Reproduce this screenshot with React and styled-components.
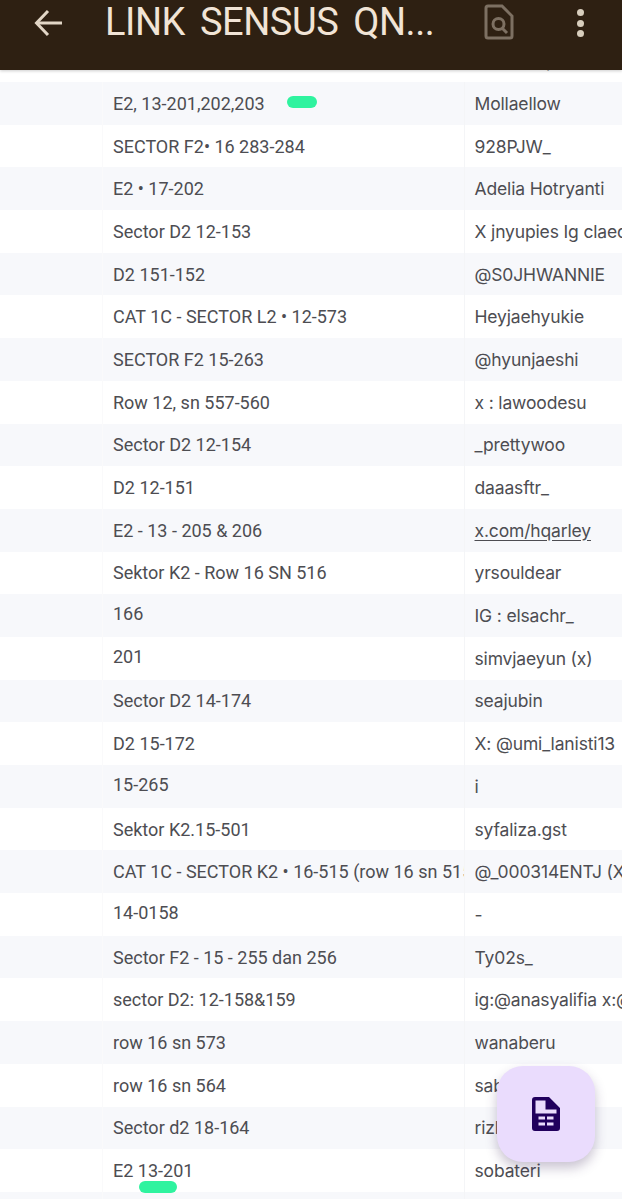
import React from 'react'
import styled, { createGlobalStyle } from 'styled-components'

const GlobalStyle = createGlobalStyle`
  html, body {
    margin: 0;
    height: 100%;
    overflow: hidden;
    background: #fff;
  }
`

const Page = styled.div`
  position: relative;
  width: 622px;
  height: 1199px;
  overflow: hidden;
  font-family: Roboto, "Liberation Sans", sans-serif;
`

const Header = styled.header`
  position: relative;
  z-index: 2;
  display: flex;
  align-items: flex-start;
  height: 70px;
  background: #2e2012;
  box-shadow: 0 1px 3px rgba(0, 0, 0, 0.2);
`

const BackButton = styled.div`
  width: 105px;
  padding: 9px 0 0 34px;
  box-sizing: border-box;
  line-height: 0;
`

const Title = styled.h1`
  width: 379px;
  margin: 0;
  font-family: Roboto, sans-serif;
  font-size: 38px;
  line-height: 44px;
  font-weight: 400;
  letter-spacing: -0.45px;
  word-spacing: 6px;
  color: #f1e4d6;
  white-space: nowrap;
`

const SearchButton = styled.div`
  width: 93px;
  padding-top: 4px;
  line-height: 0;
`

const DotsButton = styled.div`
  display: flex;
  flex-direction: column;
  gap: 3.5px;
  padding-top: 9px;
`

const Dot = styled.span`
  width: 7px;
  height: 7px;
  border-radius: 50%;
  background: #d8cebd;
`

const Peek = styled.div`
  display: grid;
  grid-template-columns: 475px 1fr;
  height: 12px;
  overflow: hidden;
  background: #fff;
`

const PeekText = styled.div`
  grid-column: 2;
  margin-top: -24px;
  font-size: 17.5px;
  line-height: 30px;
  font-family: Inter, sans-serif;
  color: #4b4b50;
  white-space: nowrap;
`

const Row = styled.div`
  display: grid;
  grid-template-columns: 103px 362px 1fr;
  height: 42.7px;
  background: ${(p) => (p.$tinted ? '#f7f8fb' : '#ffffff')};
`

const Gutter = styled.div`
  border-right: 1px solid #fafafb;
`

const Cell = styled.div`
  position: relative;
  display: flex;
  align-items: center;
  min-width: 0;
  padding: 0 3px 0 10px;
  overflow: ${(p) => (p.$open ? 'visible' : 'hidden')};
  border-right: 1px solid #f4f5f7;
  font-size: 18px;
  color: #4d4d52;
  white-space: nowrap;
`

const CellText = styled.span`
  position: relative;
  top: ${(p) => (p.$lift ? '-2px' : '0')};
`

const NameCell = styled.div`
  display: flex;
  align-items: center;
  min-width: 0;
  padding-left: 9.5px;
  overflow: hidden;
  font-family: Inter, sans-serif;
  font-size: 17.5px;
  letter-spacing: -0.15px;
  color: #4d4d52;
  white-space: nowrap;
`

const LinkText = styled.span`
  text-decoration: underline;
  text-underline-offset: 3px;
`

const Marker = styled.span`
  position: absolute;
  left: ${(p) => p.$left}px;
  top: ${(p) => p.$top}px;
  width: ${(p) => p.$width}px;
  height: 12px;
  border-radius: 6px;
  background: #2ff39f;
`

const Fab = styled.button`
  position: absolute;
  z-index: 3;
  right: 27px;
  bottom: 37px;
  display: flex;
  align-items: center;
  justify-content: center;
  width: 98px;
  height: 96px;
  padding: 0;
  border: 0;
  border-radius: 26px;
  background: #eadcfd;
  box-shadow: 0 6px 12px rgba(60, 40, 90, 0.28);
`

const ArrowIcon = () => (
  <svg width="29" height="28" viewBox="0 0 29 28" fill="none" stroke="#e2d6c6" strokeWidth="3">
    <path d="M28 14H3" />
    <path d="M14 2 2.5 14 14 26" />
  </svg>
)

const FindIcon = () => (
  <svg width="30" height="36" viewBox="0 0 30 36" fill="none" stroke="#7d7062" strokeWidth="3">
    <path d="M4 2h14l10 10v20a2 2 0 0 1-2 2H4a2 2 0 0 1-2-2V4a2 2 0 0 1 2-2z" />
    <circle cx="14.5" cy="20" r="5.5" />
    <path d="M18.5 24.5 23 29" />
  </svg>
)

const SheetIcon = () => (
  <svg width="28" height="34" viewBox="0 0 28 34">
    <path
      fill="#21005d"
      fillRule="evenodd"
      d="M3 0h14l11 11v20a3 3 0 0 1-3 3H3a3 3 0 0 1-3-3V3a3 3 0 0 1 3-3zM3.5 3.500v13h21v-4h-11v-9z"
    />
    <path
      fill="#eadcfd"
      d="M6.500 19.500h6.500v3H6.500zM15 19.500h6.500v3H15zM6.500 25.500H13v3H6.500zM15 25.500h6.500v3H15z"
    />
  </svg>
)

const rows = [
  { place: 'E2, 13-201,202,203', name: 'Mollaellow', mark: { left: 184, top: 14, width: 30 } },
  { place: 'SECTOR F2• 16 283-284', name: '928PJW_' },
  { place: 'E2 • 17-202', name: 'Adelia Hotryanti' },
  { place: 'Sector D2 12-153', name: 'X jnyupies Ig claechuu' },
  { place: 'D2 151-152', name: '@S0JHWANNIE' },
  { place: 'CAT 1C - SECTOR L2 • 12-573', name: 'Heyjaehyukie' },
  { place: 'SECTOR F2 15-263', name: '@hyunjaeshi' },
  { place: 'Row 12, sn 557-560', name: 'x : lawoodesu' },
  { place: 'Sector D2 12-154', name: '_prettywoo' },
  { place: 'D2 12-151', name: 'daaasftr_' },
  { place: 'E2 - 13 - 205 & 206', name: 'x.com/hqarley', link: true },
  { place: 'Sektor K2 - Row 16 SN 516', name: 'yrsouldear' },
  { place: '166', name: 'IG : elsachr_', lift: true },
  { place: '201', name: 'simvjaeyun (x)', lift: true },
  { place: 'Sector D2 14-174', name: 'seajubin' },
  { place: 'D2 15-172', name: 'X: @umi_lanisti13' },
  { place: '15-265', name: 'i', lift: true },
  { place: 'Sektor K2.15-501', name: 'syfaliza.gst' },
  { place: 'CAT 1C - SECTOR K2 • 16-515 (row 16 sn 515)', name: '@_000314ENTJ (X)' },
  { place: '14-0158', name: '-', lift: true },
  { place: 'Sector F2 - 15 - 255 dan 256', name: 'Ty02s_' },
  { place: 'sector D2: 12-158&159', name: 'ig:@anasyalifia x:@anasyalifia' },
  { place: 'row 16 sn 573', name: 'wanaberu' },
  { place: 'row 16 sn 564', name: 'sabrinajkt' },
  { place: 'Sector d2 18-164', name: 'rizkiaamalia_' },
  { place: 'E2 13-201', name: 'sobateri', mark: { left: 36, top: 32, width: 38 }, open: true },
  { place: '', name: '' },
]

export default function App() {
  return (
    <Page>
      <GlobalStyle />
      <Header>
        <BackButton><ArrowIcon /></BackButton>
        <Title>LINK SENSUS QN...</Title>
        <SearchButton><FindIcon /></SearchButton>
        <DotsButton><Dot /><Dot /><Dot /></DotsButton>
      </Header>
      <Peek><PeekText>haechanpooh_</PeekText></Peek>
      {rows.map((row, i) => (
        <Row key={i} $tinted={i % 2 === 0}>
          <Gutter />
          <Cell $open={row.open}>
            <CellText $lift={row.lift}>{row.place}</CellText>
            {row.mark && <Marker $left={row.mark.left} $top={row.mark.top} $width={row.mark.width} />}
          </Cell>
          <NameCell>{row.link ? <LinkText>{row.name}</LinkText> : row.name}</NameCell>
        </Row>
      ))}
      <Fab aria-label="Sheet"><SheetIcon /></Fab>
    </Page>
  )
}
